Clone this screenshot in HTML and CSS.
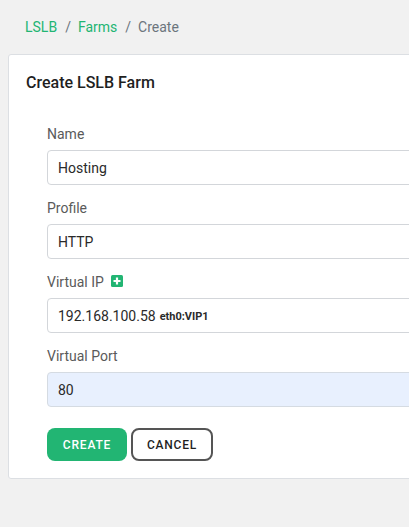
FILE: index.html
```html
<!DOCTYPE html>
<html>
<head>
<meta charset="utf-8">
<link rel="stylesheet" href="styles.css">
</head>
<body>
<nav class="breadcrumb">
  <a class="crumb link">LSLB</a><span class="sep">/</span><a class="crumb link">Farms</a><span class="sep">/</span><span class="crumb current">Create</span>
</nav>
<div class="card">
  <div class="card-header">Create LSLB Farm</div>
  <div class="card-body">
    <div class="group">
      <label class="label">Name</label>
      <div class="input">Hosting</div>
    </div>
    <div class="group">
      <label class="label">Profile</label>
      <div class="input">HTTP</div>
    </div>
    <div class="group">
      <label class="label">Virtual IP <span class="plus"><svg width="12" height="12" viewBox="0 0 12 12"><rect width="12" height="12" rx="1.5" fill="#22b573"/><path d="M6 2.5v7M2.5 6h7" stroke="#fff" stroke-width="2.2"/></svg></span></label>
      <div class="input">192.168.100.58 <span class="iface">eth0:VIP1</span></div>
    </div>
    <div class="group">
      <label class="label">Virtual Port</label>
      <div class="input autofill">80</div>
    </div>
    <div class="actions">
      <button class="btn btn-primary">CREATE</button>
      <button class="btn btn-outline">CANCEL</button>
    </div>
  </div>
</div>
</body>
</html>
```
FILE: styles.css
```css
html, body {
  margin: 0;
  padding: 0;
  background: #f1f1f1;
  overflow: hidden;
  font-family: Roboto, "Liberation Sans", sans-serif;
  color: #222;
}
.breadcrumb {
  display: flex;
  align-items: center;
  padding: 17px 0 0 25px;
  height: 20px;
  font-size: 14px;
  line-height: 20px;
}
.crumb.link { color: #22b573; }
.crumb.current { color: #6c757d; }
.sep { color: #6c757d; padding: 0 7px 0 8px; }
.card {
  margin: 17px 0 0 8px;
  width: 560px;
  background: #fff;
  border: 1px solid #dcdfe3;
  border-radius: 3px;
}
.card-header {
  padding: 18px 17px;
  font-size: 16px;
  line-height: 20px;
  font-weight: 500;
  color: #1f1f1f;
}
.card-body {
  padding: 13px 0 17px 38px;
}
.group { margin-bottom: 13px; }
.label {
  display: flex;
  align-items: center;
  gap: 7px;
  font-size: 14px;
  line-height: 20px;
  color: #5a5a5a;
  margin-bottom: 6px;
}
.plus { display: inline-flex; margin-top: -2px; }
.input {
  box-sizing: border-box;
  height: 35px;
  border: 1px solid #d3d6da;
  border-radius: 4px;
  padding: 0 10px;
  display: flex;
  align-items: center;
  font-size: 14px;
  color: #2a2a2a;
}
.iface {
  font-size: 11px;
  font-weight: 700;
  margin-left: 4px;
  margin-top: 2px;
}
.autofill {
  background: #e8f0fe;
  border-color: #d5dbe2;
}
.actions {
  display: flex;
  gap: 4px;
  margin-top: 21px;
}
.btn {
  box-sizing: border-box;
  height: 33px;
  border-radius: 8px;
  font-family: Roboto, "Liberation Sans", sans-serif;
  font-size: 12px;
  font-weight: 500;
  letter-spacing: 0.8px;
  cursor: pointer;
}
.btn-primary {
  width: 80px;
  background: #22b573;
  color: #fff;
  border: none;
}
.btn-outline {
  width: 82px;
  background: #fff;
  color: #1f1f1f;
  border: 2px solid #555;
}
```
